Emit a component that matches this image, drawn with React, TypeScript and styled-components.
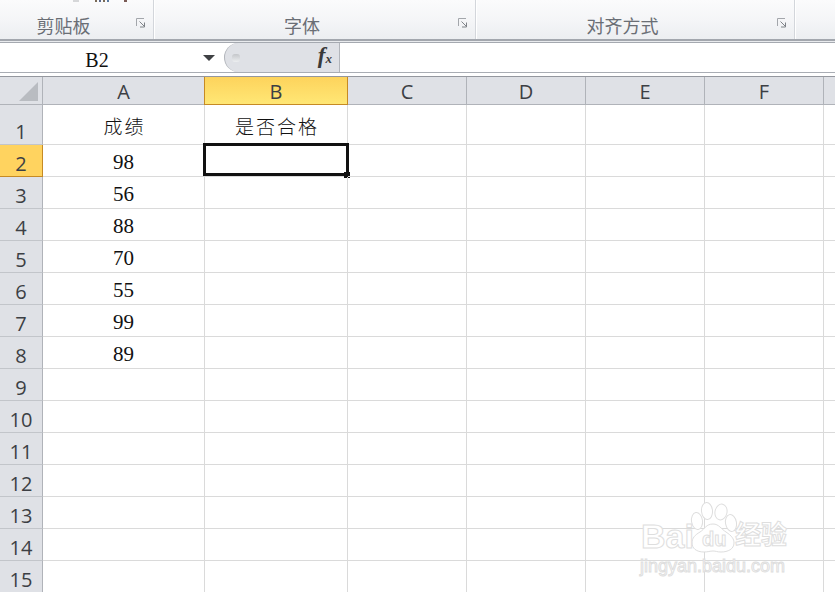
import React from "react";
import styled, { createGlobalStyle } from "styled-components";

const Global = createGlobalStyle`
  html, body { margin: 0; padding: 0; background: #fff; }
  body { width: 835px; height: 592px; overflow: hidden; }
`;
const Page = styled.div`
  position: relative; width: 835px; height: 592px; overflow: hidden; background: #fff;
  font-family: "Noto Sans CJK SC", sans-serif;
`;
const Ribbon = styled.div`
  display: flex; height: 39px;
  background: linear-gradient(#fbfbfc 0%, #f4f5f7 55%, #eceef1 100%);
`;
const Group = styled.div<{ $w: number }>`
  position: relative; width: ${p => p.$w}px; box-sizing: border-box; padding: 12px 27px 0 0;
  border-right: 1px solid #fff; box-shadow: inset -1px 0 0 #d3d6db;
  text-align: center; font-size: 18px; line-height: 27px; color: #6a6e75;
`;
const Launcher = styled.svg`
  position: absolute; right: 8px; top: 18px; width: 10px; height: 10px;
`;
const ClippedIcons = styled.svg`
  position: absolute; left: 70px; top: 0; width: 60px; height: 3px;
`;
const Rule = styled.div`
  height: 3px; box-sizing: border-box; background: #e9ebee;
  border-top: 2px solid #a3a7ae;
`;
const FormulaBar = styled.div`
  display: flex; height: 31px; box-sizing: border-box;
  border-top: 1px solid #a5a9b0; border-bottom: 1px solid #a9adb4; background: #fff;
`;
const NameBox = styled.div`
  width: 194px; box-sizing: border-box; padding-top: 2px; text-align: center;
  font: 20px/31px "Liberation Serif", serif; color: #111;
`;
const DropZone = styled.div`
  width: 30px; display: flex; align-items: center; justify-content: center;
  padding: 1px 1px 0 0; box-sizing: border-box;
`;
const Arrow = styled.div`
  width: 0; height: 0; border-left: 6px solid transparent; border-right: 6px solid transparent;
  border-top: 6px solid #3f4144;
`;
const FxPill = styled.div`
  width: 116px; height: 29px; box-sizing: border-box; background: #dfe1e6;
  border: 1px solid #b2b5bb; border-width: 0 1px 0 1px; border-radius: 15px 0 0 15px;
  display: flex; align-items: center; justify-content: space-between; padding: 0 7px 0 7px;
`;
const Dot = styled.div`
  width: 8px; height: 8px; border-radius: 3px; background: linear-gradient(#c4c6ca, #eceef0);
`;
const Fx = styled.span`
  font: italic bold 23px/24px "Liberation Serif", serif; color: #3a3a3a; letter-spacing: 0;
  & > small { font-size: 13px; }
`;
const Gap = styled.div`
  height: 3px; background: #fff; border-bottom: 1px solid #94979e;
`;
const Grid = styled.div`
  display: grid;
  grid-template-columns: 43px 162px 143px 119px 119px 119px 119px 30px;
  grid-template-rows: 28px 40px repeat(14, 32px);
`;
const Corner = styled.div`
  position: relative; background: #dfe1e6; box-sizing: border-box;
  border-right: 1px solid #b0b3b9; border-bottom: 1px solid #b0b3b9;
`;
const CornerMark = styled.svg`
  position: absolute; right: 4px; bottom: 3px; width: 19px; height: 19px;
`;
const ColHead = styled.div<{ $on?: boolean }>`
  box-sizing: border-box; text-align: center;
  font: 20px/30px "Open Sans", sans-serif; color: #3c3f44;
  background: ${p => (p.$on ? "linear-gradient(#fdd35c, #ffe775)" : "#dfe1e6")};
  border-right: 1px solid ${p => (p.$on ? "#c68a24" : "#b0b3b9")};
  border-bottom: 1px solid ${p => (p.$on ? "#c68a24" : "#b0b3b9")};
  ${p => p.$on && "margin-left: -1px; border-left: 1px solid #c68a24;"}
`;
const RowHead = styled.div<{ $on?: boolean }>`
  box-sizing: border-box; display: flex; align-items: flex-end; justify-content: center;
  font: 20px/24px "Open Sans", sans-serif; color: #3c3f44;
  background: ${p => (p.$on ? "#ffd35f" : "#dfe1e6")};
  border-right: 1px solid ${p => (p.$on ? "#c68a24" : "#b0b3b9")};
  border-bottom: 1px solid ${p => (p.$on ? "#c68a24" : "#c2c5ca")};
`;
const Cell = styled.div<{ $cjk?: boolean }>`
  position: relative; box-sizing: border-box; text-align: center;
  border-right: 1px solid #dadada; border-bottom: 1px solid #dadada;
  color: #111;
  display: flex; align-items: center; justify-content: center;
  font: ${p => (p.$cjk ? `300 19px/28px "Noto Sans CJK SC", sans-serif` : `21px/28px "Liberation Serif", serif`)};
  letter-spacing: ${p => (p.$cjk ? "2px" : "0")};
  padding-top: ${p => (p.$cjk ? "2px" : "3px")};
  padding-left: ${p => (p.$cjk ? "2px" : "0")};
`;
const Selection = styled.div`
  position: absolute; left: -2px; top: -2px; right: -2px; bottom: 0;
  border: 3px solid #111;
  &::after { content: ""; position: absolute; right: -4px; bottom: -5px; width: 6px; height: 6px; background: #111; }
`;
const Watermark = styled.div`
  position: absolute; left: 640px; top: 500px; width: 160px; height: 85px; pointer-events: none;
`;
const Paw = styled.svg`
  position: absolute; left: 0; top: 0; width: 160px; height: 85px;
`;
const WmText = styled.span<{ $l: number; $t: number; $s: number; $w?: number }>`
  position: absolute; left: ${p => p.$l}px; top: ${p => p.$t}px;
  font: ${p => p.$w ?? 700} ${p => p.$s}px/1 "Liberation Sans", "Noto Sans CJK SC", sans-serif;
  color: #fff; -webkit-text-stroke: 1px #dedede; white-space: nowrap;
`;

const cols = ["C", "D", "E", "F"];
const scores: Record<number, string> = { 2: "98", 3: "56", 4: "88", 5: "70", 6: "55", 7: "99", 8: "89" };

const LauncherIcon = () => (
  <Launcher viewBox="0 0 10 10">
    <path d="M.5 8V.5H8" fill="none" stroke="#a3a6ab" />
    <path d="M3.5 3.5L8 8M8.5 4.5v4.5H4" fill="none" stroke="#7f8388" />
  </Launcher>
);

export default function App() {
  const rows = Array.from({ length: 15 }, (_, i) => i + 1);
  return (
    <Page>
      <Global />
      <Ribbon>
        <Group $w={155}>
          <ClippedIcons viewBox="0 0 60 3">
            <rect x="3" y="0" width="6" height="2" fill="#d6d7d9" />
            <rect x="25" y="0" width="2" height="2" fill="#7a6a55" />
            <rect x="29" y="0" width="2" height="2" fill="#5a6a90" />
            <rect x="33" y="0" width="2" height="2" fill="#7a6a55" />
            <rect x="37" y="0" width="2" height="2" fill="#5a7aa0" />
            <rect x="54" y="0" width="3" height="2" fill="#7a5a55" />
          </ClippedIcons>
          剪贴板<LauncherIcon />
        </Group>
        <Group $w={322}>字体<LauncherIcon /></Group>
        <Group $w={319}>对齐方式<LauncherIcon /></Group>
      </Ribbon>
      <Rule />
      <FormulaBar>
        <NameBox>B2</NameBox>
        <DropZone><Arrow /></DropZone>
        <FxPill>
          <Dot />
          <Fx>f<small>x</small></Fx>
        </FxPill>
      </FormulaBar>
      <Gap />
      <Grid>
        <Corner>
          <CornerMark viewBox="0 0 19 19"><path d="M19 0V19H0Z" fill="#b9bcc1" /></CornerMark>
        </Corner>
        <ColHead>A</ColHead>
        <ColHead $on>B</ColHead>
        {cols.map(c => <ColHead key={c}>{c}</ColHead>)}
        <ColHead />
        {rows.map(r => (
          <React.Fragment key={r}>
            <RowHead $on={r === 2}>{r}</RowHead>
            <Cell $cjk={r === 1}>{r === 1 ? "成绩" : scores[r]}</Cell>
            <Cell $cjk={r === 1}>
              {r === 1 ? "是否合格" : null}
              {r === 2 ? <Selection /> : null}
            </Cell>
            {cols.map(c => <Cell key={c} />)}
            <Cell />
          </React.Fragment>
        ))}
      </Grid>
      <Watermark>
        <Paw viewBox="0 0 160 85" fill="#fff" stroke="#dedede" strokeWidth="1">
          <ellipse cx="57" cy="21" rx="5.5" ry="8.5" transform="rotate(-8 57 21)" />
          <ellipse cx="67" cy="11" rx="5.5" ry="8.5" transform="rotate(-5 67 11)" />
          <ellipse cx="81" cy="12" rx="6" ry="8" transform="rotate(12 81 12)" />
          <ellipse cx="91" cy="23" rx="5.5" ry="8.5" transform="rotate(-10 91 23)" />
          <path d="M73 24c6 0 8 5 13 8 6 4 8 7 8 11 0 6-6 9-13 9-4 0-5-1-8-1s-5 1-9 1c-8 0-12-4-12-9 0-5 3-8 8-11 5-3 6-8 13-8z" />
        </Paw>
        <WmText $l={1} $t={19} $s={34}>Bai</WmText>
        <WmText $l={62} $t={29} $s={20}>du</WmText>
        <WmText $l={95} $t={22} $s={26}>经验</WmText>
        <WmText $l={0} $t={57} $s={18} $w={400}>jingyan.baidu.com</WmText>
      </Watermark>
    </Page>
  );
}
